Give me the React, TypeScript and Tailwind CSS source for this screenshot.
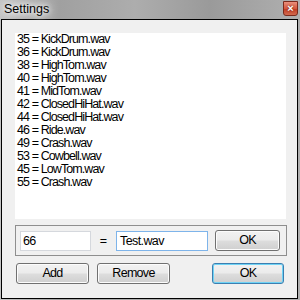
const ITEMS = [
  '35 = KickDrum.wav',
  '36 = KickDrum.wav',
  '38 = HighTom.wav',
  '40 = HighTom.wav',
  '41 = MidTom.wav',
  '42 = ClosedHiHat.wav',
  '44 = ClosedHiHat.wav',
  '46 = Ride.wav',
  '49 = Crash.wav',
  '53 = Cowbell.wav',
  '45 = LowTom.wav',
  '55 = Crash.wav',
];

const btn =
  'flex items-center justify-center h-[21px] rounded-[3px] border text-[12.5px] tracking-[-0.7px] text-black bg-[linear-gradient(#f2f2f2,#ebebeb_48%,#dddddd_52%,#cfcfcf)]';

function Button({ label, w, def }: { label: string; w: string; def?: boolean }) {
  return (
    <div
      className={`${btn} ${w} ${
        def
          ? 'border-[#3c7fb1] shadow-[inset_0_0_0_1px_#6fd3f5]'
          : 'border-[#707070] shadow-[inset_0_0_0_1px_#fcfcfc]'
      }`}
    >
      {label}
    </div>
  );
}

export default function App() {
  return (
    <div
      className="w-[300px] h-[300px] overflow-hidden bg-[linear-gradient(90deg,#c4c4c4,#a0a0a0_20%,#adadad_45%,#9a9a9a_70%,#b0b0b0)]"
      style={{ fontFamily: '"Liberation Sans", Arial, sans-serif' }}
    >
      {/* Title bar */}
      <div className="h-[19px] flex items-start justify-between">
        <span className="pl-[4px] pt-[2px] text-[12.5px] leading-[14px] text-black [text-shadow:0_0_5px_#fff,0_0_9px_#fff,0_0_12px_#eee]">
          Settings
        </span>
        <div className="mr-[2px] mt-[1px] w-[15px] h-[15px] rounded-b-[3px] border border-[#7a2a1c] bg-[linear-gradient(#e9907c,#d6573d_50%,#c13b22_52%,#d26a4f)] flex items-center justify-center">
          <span className="text-white text-[11px] font-bold leading-none [text-shadow:0_0_2px_#601808]">×</span>
        </div>
      </div>

      {/* Window body */}
      <div className="ml-[1px] w-[297px] h-[280px] border border-black bg-[#f0f0f0] flex flex-col">
        {/* List */}
        <div className="ml-[13px] mt-[13px] w-[271px] h-[186px] bg-white pl-[2px]">
          {ITEMS.map((it, i) => (
            <div key={i} className="h-[13px] leading-[13px] text-[12.5px] tracking-[-0.9px] text-black whitespace-nowrap">
              {it}
            </div>
          ))}
        </div>

        {/* Edit group */}
        <div className="ml-[13px] mt-[6px] w-[272px] h-[31px] border border-[#8e8e8e] flex items-start pl-[4px] pt-[5px]">
          <div className="w-[71px] h-[20px] bg-white border border-[#d5d8dd] pl-[2px] text-[12.5px] leading-[18px] tracking-[-0.6px] text-black">
            66
          </div>
          <div className="w-[25px] text-center text-[12.5px] leading-[20px] text-black">=</div>
          <div className="w-[92px] h-[20px] bg-white border border-[#7eb4ea] pl-[3px] text-[12.5px] leading-[18px] tracking-[-0.6px] text-black">
            Test.wav
          </div>
          <div className="ml-[7px] -mt-[1px]">
            <Button label="OK" w="w-[65px]" />
          </div>
        </div>

        {/* Buttons */}
        <div className="ml-[14px] mt-[7px] flex">
          <Button label="Add" w="w-[73px]" />
          <div className="ml-[8px]">
            <Button label="Remove" w="w-[73px]" />
          </div>
          <div className="ml-[42px]">
            <Button label="OK" w="w-[72px]" def />
          </div>
        </div>
      </div>
    </div>
  );
}
